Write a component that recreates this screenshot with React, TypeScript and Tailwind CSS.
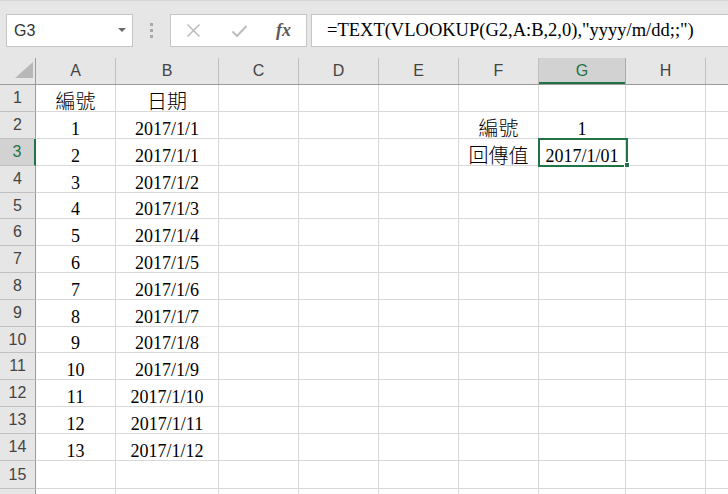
import React from "react";

const COLS = [
  { key: "A", w: "w-[80px]" },
  { key: "B", w: "w-[103px]" },
  { key: "C", w: "w-[80px]" },
  { key: "D", w: "w-[80px]" },
  { key: "E", w: "w-[80px]" },
  { key: "F", w: "w-[80px]" },
  { key: "G", w: "w-[87px]" },
  { key: "H", w: "w-[80px]" },
  { key: "I", w: "w-[80px]" },
];

// row heights in px (Excel rounds 26.8 to whole pixels)
const ROW_H = ["h-[27px]", "h-[27px]", "h-[27px]", "h-[27px]", "h-[26px]", "h-[27px]", "h-[27px]", "h-[27px]", "h-[27px]", "h-[26px]", "h-[27px]", "h-[27px]", "h-[27px]", "h-[27px]", "h-[28px]", "h-[27px]"];

const cells: Record<string, string> = {
  A1: "編號", B1: "日期",
  F2: "編號", G2: "1",
  F3: "回傳值", G3: "2017/1/01",
};
for (let i = 0; i < 13; i++) {
  cells["A" + (i + 2)] = String(i + 1);
  cells["B" + (i + 2)] = "2017/1/" + Math.max(1, i);
}

const isCjk = (s: string) => /[\u4e00-\u9fff]/.test(s);

const SERIF = "font-['Liberation_Serif','Noto_Sans_CJK_TC',serif]";
const SANS = "font-['Liberation_Sans',Arial,sans-serif]";

function TopBar() {
  return (
    <div className="flex h-[58px] items-start border-t border-[#d6d6d6] bg-[#e6e6e6] pl-[6px] pt-[13px]">
      <div className="flex h-[33px] w-[127px] items-center justify-between border border-[#c6c6c6] bg-white pl-[7px] pr-[6px]">
        <span className={`${SANS} text-[16px] text-[#333]`}>G3</span>
        <svg width="8" height="5" viewBox="0 0 8 5"><path d="M0 0h8L4 4z" fill="#6a6a6a" /></svg>
      </div>
      <div className="flex w-[37px] flex-col items-center gap-[3px] pt-[9px]">
        <span className="h-[3px] w-[3px] bg-[#a8a8a8]" />
        <span className="h-[3px] w-[3px] bg-[#a8a8a8]" />
        <span className="h-[3px] w-[3px] bg-[#a8a8a8]" />
      </div>
      <div className="flex h-[33px] w-[137px] items-center border border-[#c6c6c6] bg-white pl-[15px]">
        <svg width="15" height="15" viewBox="0 0 15 15"><path d="M1.5 1.5l12 12M13.5 1.5l-12 12" stroke="#bdbdbd" strokeWidth="1.6" /></svg>
        <svg className="ml-[30px]" width="17" height="14" viewBox="0 0 17 14"><path d="M1.5 7.5l4.5 4.5L15.5 2" stroke="#bdbdbd" strokeWidth="2" fill="none" /></svg>
        <span className="ml-[28px] font-['Liberation_Serif',serif] text-[18px] font-bold italic text-[#5a5a5a]">fx</span>
      </div>
      <div className="ml-[4px] flex h-[33px] flex-1 items-center border border-[#c6c6c6] border-r-0 bg-white pl-[15px]">
        <span className={`${SERIF} text-[18.5px] text-black whitespace-nowrap`}>=TEXT(VLOOKUP(G2,A:B,2,0),"yyyy/m/dd;;")</span>
      </div>
    </div>
  );
}

function HeaderRow() {
  return (
    <div className="flex h-[27px] border-b border-[#9b9b9b] bg-[#e6e6e6]">
      <div className="relative w-[36px] shrink-0 border-r border-[#9b9b9b]">
        <svg className="absolute left-[15px] top-[4px]" width="18" height="16" viewBox="0 0 18 16"><path d="M18 0v16H0z" fill="#b7b7b7" /></svg>
      </div>
      {COLS.map(c => {
        const sel = c.key === "G";
        return (
          <div
            key={c.key}
            className={`${c.w} shrink-0 flex items-center justify-center border-r ${SANS} text-[16px] ${sel ? "border-[#ababab] bg-[#d2d2d2] text-[#217346] shadow-[inset_0_-2px_0_#217346]" : "border-[#c0c0c0] text-[#444]"}`}
          >
            {c.key === "I" ? "" : c.key}
          </div>
        );
      })}
    </div>
  );
}

function Row({ n }: { n: number }) {
  const sel = n === 3;
  return (
    <div className={`flex ${ROW_H[n - 1]}`}>
      <div
        className={`w-[36px] shrink-0 flex items-center justify-center border-b border-r ${SANS} text-[16px] ${sel ? "border-b-[#c0c0c0] border-r-[#217346] border-r-2 bg-[#d2d2d2] text-[#217346]" : "border-b-[#c0c0c0] border-r-[#9b9b9b] bg-[#e6e6e6] text-[#444]"}`}
      >
        {n < 16 ? n : ""}
      </div>
      {COLS.map(c => {
        const v = cells[c.key + n] ?? "";
        const size = isCjk(v) ? "text-[20px] font-light" : "text-[18px]";
        return (
          <div
            key={c.key}
            className={`${c.w} shrink-0 flex items-end justify-center border-b border-r border-[#d8d8d8] ${SERIF} ${size} leading-[17px] text-black whitespace-nowrap`}
          >
            {v}
          </div>
        );
      })}
    </div>
  );
}

export default function App() {
  return (
    <div className="relative h-[494px] w-[728px] overflow-hidden bg-white">
      <TopBar />
      <HeaderRow />
      <div>
        {Array.from({ length: 16 }, (_, i) => <Row key={i} n={i + 1} />)}
      </div>
      {/* active cell outline on G3 */}
      <div className="pointer-events-none absolute left-[538px] top-[138px] h-[29px] w-[90px] border-2 border-[#217346]" />
      <div className="pointer-events-none absolute left-[624px] top-[162px] h-[6px] w-[6px] border border-white bg-[#217346]" />
    </div>
  );
}
